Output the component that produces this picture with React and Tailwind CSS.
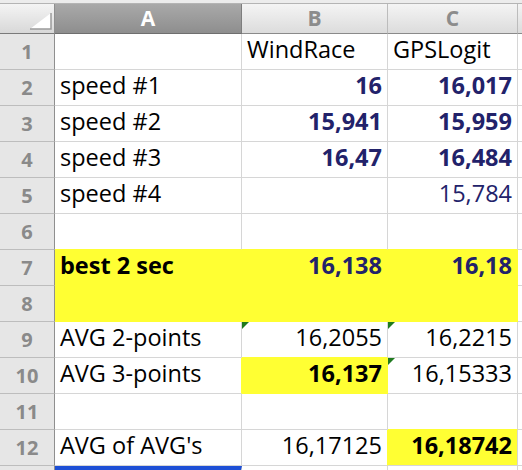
import React from "react";

const GRID = "border-[#d6d6d6]";
const YEL = "bg-[#ffff33]";

function Tri() {
  return (
    <svg className="absolute left-0 top-0" width="7" height="7" viewBox="0 0 7 7">
      <polygon points="0,0 7,0 0,7" fill="#1f7a1f" />
    </svg>
  );
}

function Cell({ children, className = "", right = false, tri = false }) {
  return (
    <div
      className={`relative h-[36px] border-r border-b flex items-end pb-[8px] leading-none text-[23.5px] whitespace-nowrap overflow-hidden ${
        right ? "justify-end pr-[5px]" : "pl-[5px]"
      } ${className}`}
    >
      {tri && <Tri />}
      {children}
    </div>
  );
}

function RowHead({ n }) {
  return (
    <div className="h-[36px] border-r border-r-[#8f8f8f] border-b border-b-[#bdbdbd] bg-[#e6e6e6] flex items-center justify-center text-[20px] font-bold text-[#8a8a8a] leading-none pt-[1px]">
      {n}
    </div>
  );
}

export default function App() {
  const navyB = "text-[#22226a] font-bold";
  return (
    <div
      className="w-[522px] h-[470px] overflow-hidden bg-white"
      style={{ fontFamily: '"Open Sans", "Liberation Sans", sans-serif' }}
    >
      <div className="h-[4px] bg-[#ececec] border-b border-[#b4b4b4]" />
      <div className="grid grid-cols-[55px_187px_146px_130px_1fr]">
        {/* header row */}
        <div className="relative h-[30px] border-r border-r-[#8f8f8f] border-b border-b-[#7a7a7a] bg-gradient-to-b from-[#f4f4f4] to-[#d8d8d8]">
          <svg className="absolute left-[30px] top-[9px]" width="22" height="17" viewBox="0 0 22 17">
            <polygon points="21,0 21,16 0,16" fill="#ffffff" />
            <polyline points="21,0 21,16 0,16" fill="none" stroke="#9a9a9a" strokeWidth="1.5" />
          </svg>
        </div>
        <div className="h-[30px] border-r border-r-[#7d7d7d] border-b border-b-[#6e6e6e] bg-gradient-to-b from-[#a9a9a9] to-[#8e8e8e] flex items-center justify-center text-[21px] font-bold text-white leading-none">
          A
        </div>
        <div className="h-[30px] border-r border-r-[#bcbcbc] border-b border-b-[#8a8a8a] bg-gradient-to-b from-[#f4f4f4] to-[#dcdcdc] flex items-center justify-center text-[21px] font-bold text-[#8c8c8c] leading-none">
          B
        </div>
        <div className="h-[30px] border-r border-r-[#bcbcbc] border-b border-b-[#8a8a8a] bg-gradient-to-b from-[#f4f4f4] to-[#dcdcdc] flex items-center justify-center text-[21px] font-bold text-[#8c8c8c] leading-none">
          C
        </div>
        <div className="h-[30px] border-b border-b-[#8a8a8a] bg-gradient-to-b from-[#f4f4f4] to-[#dcdcdc]" />

        {/* row 1 */}
        <RowHead n="1" />
        <Cell className={GRID} />
        <Cell className={`${GRID} text-black`}>WindRace</Cell>
        <Cell className={`${GRID} text-black`}>GPSLogit</Cell>
        <Cell className={`${GRID} border-r-0`} />

        {/* row 2 */}
        <RowHead n="2" />
        <Cell className={`${GRID} text-black`}>speed #1</Cell>
        <Cell right className={`${GRID} ${navyB}`}>16</Cell>
        <Cell right className={`${GRID} ${navyB}`}>16,017</Cell>
        <Cell className={`${GRID} border-r-0`} />

        {/* row 3 */}
        <RowHead n="3" />
        <Cell className={`${GRID} text-black`}>speed #2</Cell>
        <Cell right className={`${GRID} ${navyB}`}>15,941</Cell>
        <Cell right className={`${GRID} ${navyB}`}>15,959</Cell>
        <Cell className={`${GRID} border-r-0`} />

        {/* row 4 */}
        <RowHead n="4" />
        <Cell className={`${GRID} text-black`}>speed #3</Cell>
        <Cell right className={`${GRID} ${navyB}`}>16,47</Cell>
        <Cell right className={`${GRID} ${navyB}`}>16,484</Cell>
        <Cell className={`${GRID} border-r-0`} />

        {/* row 5 */}
        <RowHead n="5" />
        <Cell className={`${GRID} text-black`}>speed #4</Cell>
        <Cell className={GRID} />
        <Cell right className={`${GRID} text-[#22226a]`}>15,784</Cell>
        <Cell className={`${GRID} border-r-0`} />

        {/* row 6 */}
        <RowHead n="6" />
        <Cell className="border-r-[#d6d6d6] border-b-[#ffff33]" />
        <Cell className="border-r-[#d6d6d6] border-b-[#ffff33]" />
        <Cell className="border-r-[#d6d6d6] border-b-[#ffff33]" />
        <Cell className={`${GRID} border-r-0`} />

        {/* row 7 */}
        <RowHead n="7" />
        <Cell className={`${YEL} border-[#ffff33] text-black font-bold`}>best 2 sec</Cell>
        <Cell right className={`${YEL} border-[#ffff33] ${navyB}`}>16,138</Cell>
        <Cell right className={`${YEL} border-[#ffff33] ${navyB}`}>16,18</Cell>
        <Cell className={`${GRID} border-r-0`} />

        {/* row 8 */}
        <RowHead n="8" />
        <Cell className={`${YEL} border-[#ffff33]`} />
        <Cell className={`${YEL} border-[#ffff33]`} />
        <Cell className={`${YEL} border-[#ffff33]`} />
        <Cell className={`${GRID} border-r-0`} />

        {/* row 9 */}
        <RowHead n="9" />
        <Cell className={`${GRID} text-black`}>AVG 2-points</Cell>
        <Cell right tri className="border-r-[#d6d6d6] border-b-[#ffff33] text-black">16,2055</Cell>
        <Cell right tri className={`${GRID} text-black`}>16,2215</Cell>
        <Cell className={`${GRID} border-r-0`} />

        {/* row 10 */}
        <RowHead n="10" />
        <Cell className="border-r-[#ffff33] border-b-[#d6d6d6] text-black">AVG 3-points</Cell>
        <Cell right className={`${YEL} border-[#ffff33] text-black font-bold`}>16,137</Cell>
        <Cell right tri className={`${GRID} text-black`}>16,15333</Cell>
        <Cell className={`${GRID} border-r-0`} />

        {/* row 11 */}
        <RowHead n="11" />
        <Cell className={GRID} />
        <Cell className={GRID} />
        <Cell className="border-r-[#d6d6d6] border-b-[#ffff33]" />
        <Cell className={`${GRID} border-r-0`} />

        {/* row 12 */}
        <RowHead n="12" />
        <Cell className={`${GRID} text-black`}>AVG of AVG's</Cell>
        <Cell right className="border-r-[#ffff33] border-b-[#d6d6d6] text-black">16,17125</Cell>
        <Cell right className={`${YEL} border-r-[#d6d6d6] border-b-[#d6d6d6] text-black font-bold`}>16,18742</Cell>
        <Cell className={`${GRID} border-r-0`} />

        {/* row 13 (partially visible) */}
        <RowHead n="" />
        <div className="h-[36px] border-t-[4px] border-t-[#1d4fd6] border-r border-r-[#d6d6d6]" />
        <Cell className={GRID} />
        <Cell className={GRID} />
        <Cell className={`${GRID} border-r-0`} />
      </div>
    </div>
  );
}
